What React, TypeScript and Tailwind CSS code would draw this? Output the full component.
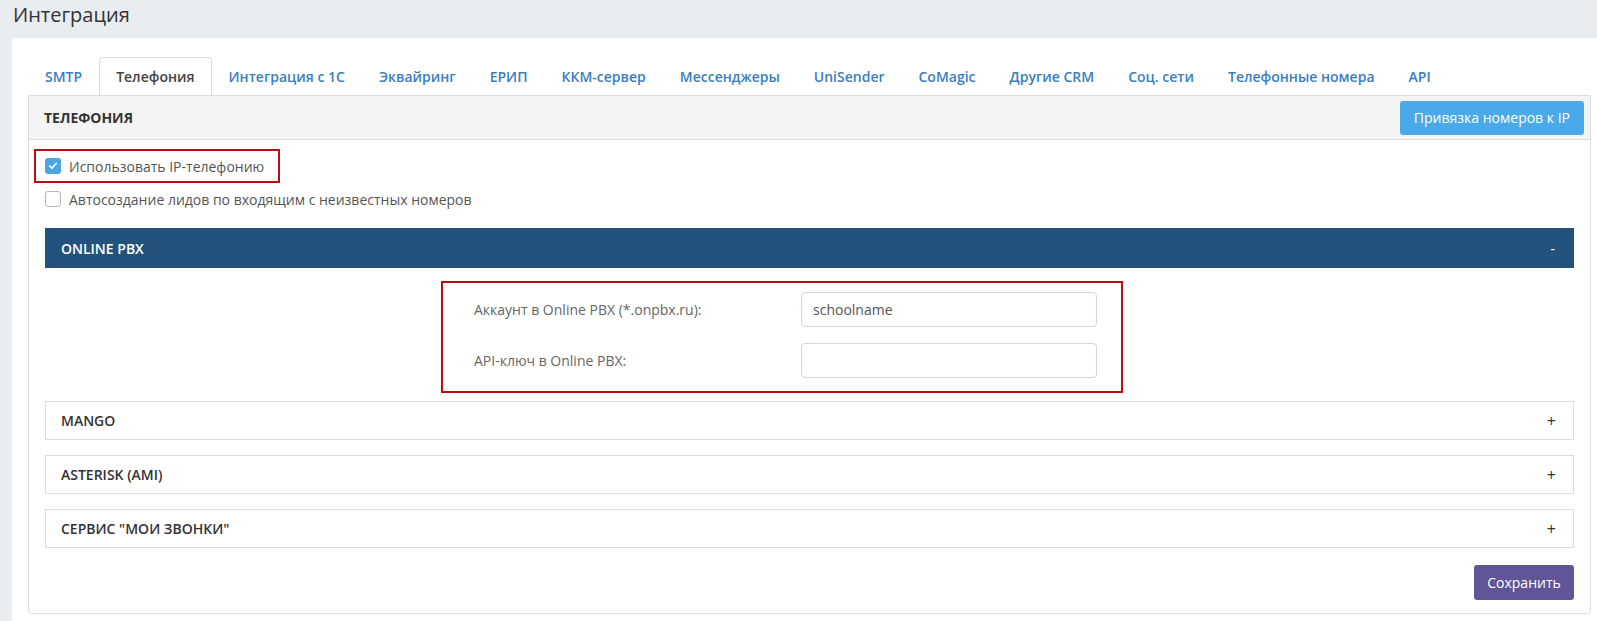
import { Check } from 'lucide-react'

const tabs = [
  'SMTP',
  'Телефония',
  'Интеграция с 1С',
  'Эквайринг',
  'ЕРИП',
  'ККМ-сервер',
  'Мессенджеры',
  'UniSender',
  'CoMagic',
  'Другие CRM',
  'Соц. сети',
  'Телефонные номера',
  'API',
]

const providers = ['MANGO', 'ASTERISK (AMI)', 'СЕРВИС "МОИ ЗВОНКИ"']

function Checkbox({ checked }: { checked?: boolean }) {
  if (checked) {
    return (
      <span className="flex h-4 w-4 items-center justify-center rounded-[3px] bg-[#4aa6e3]">
        <Check className="h-[10px] w-[10px] text-white" strokeWidth={4} />
      </span>
    )
  }
  return <span className="h-4 w-4 rounded-[3px] border border-[#b5b9c0] bg-white" />
}

function Field({ label, value }: { label: string; value?: string }) {
  return (
    <div className="flex h-[35px] items-center">
      <div className="w-[327px] text-[14px] text-[#666]">{label}</div>
      <input
        className="h-[35px] w-[296px] rounded-[4px] border border-[#d2d6dd] px-[11px] text-[14px] text-[#555] outline-none"
        defaultValue={value}
        readOnly
      />
    </div>
  )
}

export default function App() {
  return (
    <div className="min-h-screen bg-[#e9ecf1] font-['Open_Sans',sans-serif]">
      <div className="h-[38px] pl-[13px] text-[20px] leading-[30px] text-[#333]">Интеграция</div>

      <div className="ml-[12px] rounded-l-[4px] bg-white pb-[20px] pl-[16px] pr-[6px] pt-[19px]">
        <div className="flex h-[38px]">
          {tabs.map((t) => (
            <div
              className={
                t === 'Телефония'
                  ? 'flex items-center rounded-t-[4px] border-x border-t border-[#ddd] px-[16px] text-[14px] font-semibold text-[#444]'
                  : 'flex items-center px-[17px] text-[14px] font-semibold text-[#3a7ebf]'
              }
              key={t}
            >
              {t}
            </div>
          ))}
        </div>

        <div className="rounded-b-[4px] border border-[#ddd]">
          <div className="flex h-[44px] items-center justify-between border-b border-[#ddd] bg-[#f4f4f4] pl-[15px] pr-[6px]">
            <div className="text-[14px] font-bold text-[#333]">ТЕЛЕФОНИЯ</div>
            <button className="h-[34px] rounded-[3px] bg-[#4aa9e8] px-[14px] text-[14px] text-white">
              Привязка номеров к IP
            </button>
          </div>

          <div className="px-[16px] pb-[13px] pt-[9px]">
            <div className="-ml-[11px] inline-flex h-[34px] items-center gap-[8px] border-2 border-[#b80f12] pl-[9px] pr-[14px] text-[14px] text-[#555]">
              <Checkbox checked />
              <span>Использовать IP-телефонию</span>
            </div>
            <div className="flex h-[32px] items-center gap-[8px] text-[14px] text-[#555]">
              <Checkbox />
              <span>Автосоздание лидов по входящим с неизвестных номеров</span>
            </div>

            <div className="mt-[13px] flex h-[40px] items-center justify-between bg-[#23537c] pl-[16px] pr-[19px] text-[14px] font-semibold text-white">
              <span>ONLINE PBX</span>
              <span className="font-normal">-</span>
            </div>

            <div className="ml-[396px] mt-[13px] flex w-[682px] flex-col gap-[16px] border-2 border-[#b80f12] pb-[13px] pl-[31px] pt-[9px]">
              <Field label="Аккаунт в Online PBX (*.onpbx.ru):" value="schoolname" />
              <Field label="API-ключ в Online PBX:" />
            </div>

            <div className="mt-[8px] flex flex-col gap-[15px]">
              {providers.map((p) => (
                <div
                  className="flex h-[39px] items-center justify-between border border-[#ddd] pl-[15px] pr-[17px] text-[14px] font-semibold text-[#333]"
                  key={p}
                >
                  <span>{p}</span>
                  <span className="text-[16px] font-normal">+</span>
                </div>
              ))}
            </div>

            <div className="mt-[17px] flex justify-end">
              <button className="h-[35px] w-[100px] rounded-[3px] bg-[#615597] text-[14px] text-white">
                Сохранить
              </button>
            </div>
          </div>
        </div>
      </div>
    </div>
  )
}
